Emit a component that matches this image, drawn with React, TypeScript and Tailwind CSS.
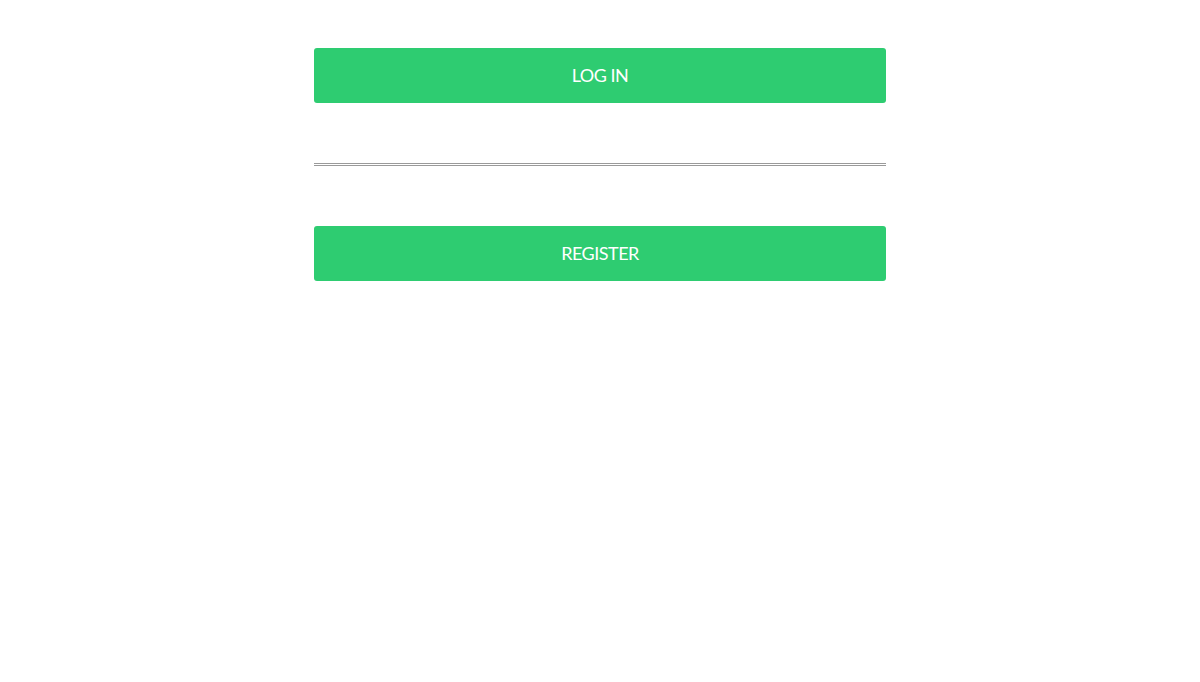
import React from 'react';

export default function App() {
  return (
    <div className="min-h-screen bg-white" style={{ fontFamily: 'Lato, "Noto Sans", sans-serif' }}>
      <div className="mx-auto w-[572px] pt-[48px]">
        <button className="w-full h-[55px] bg-[#2ecc71] rounded-[3px] text-white text-[18px] tracking-[-0.5px] flex items-center justify-center">
          LOG IN
        </button>
        <div className="mt-[60px] h-[3px] border-t border-b border-[#9a9a9a]" />
        <button className="mt-[60px] w-full h-[55px] bg-[#2ecc71] rounded-[3px] text-white text-[18px] tracking-[-0.5px] flex items-center justify-center">
          REGISTER
        </button>
      </div>
    </div>
  );
}
